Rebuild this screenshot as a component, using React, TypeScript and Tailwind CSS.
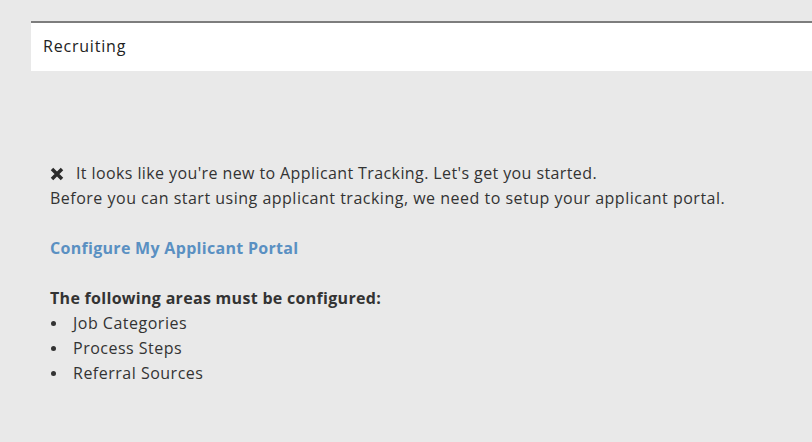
export default function App() {
  return (
    <div className="min-h-screen bg-[#e9e9e9] pt-[21px] pl-[31px] font-['Open_Sans',sans-serif] text-[#333]">
      <div className="flex h-[50px] items-center border-t-2 border-[#7d7d7d] bg-white pl-3 pb-[3px] text-[16px] tracking-[0.8px] text-[#222]">
        Recruiting
      </div>

      <div className="pl-[19px] pt-[90px] text-[16px] leading-[25px] tracking-[0.5px]">
        <p className="flex items-center">
          <svg viewBox="0 0 14 14" className="mr-[12px] h-[14px] w-[14px] text-[#2b2b2b]">
            <path d="M2 2 L12 12 M12 2 L2 12" stroke="currentColor" strokeWidth="3.5" />
          </svg>
          <span className="tracking-[0.4px]">
            It looks like you're new to Applicant Tracking. Let's get you started.
          </span>
        </p>
        <p>Before you can start using applicant tracking, we need to setup your applicant portal.</p>

        <p className="mt-[25px]">
          <a href="#" className="font-bold tracking-[0.3px] text-[#5a90c2]">
            Configure My Applicant Portal
          </a>
        </p>

        <p className="mt-[25px] font-bold tracking-[0.3px]">The following areas must be configured:</p>
        <ul>
          {['Job Categories', 'Process Steps', 'Referral Sources'].map((item) => (
            <li key={item} className="flex items-center">
              <span className="ml-[1px] mr-[17px] h-[5px] w-[5px] rounded-full bg-[#333]" />
              {item}
            </li>
          ))}
        </ul>
      </div>
    </div>
  );
}
